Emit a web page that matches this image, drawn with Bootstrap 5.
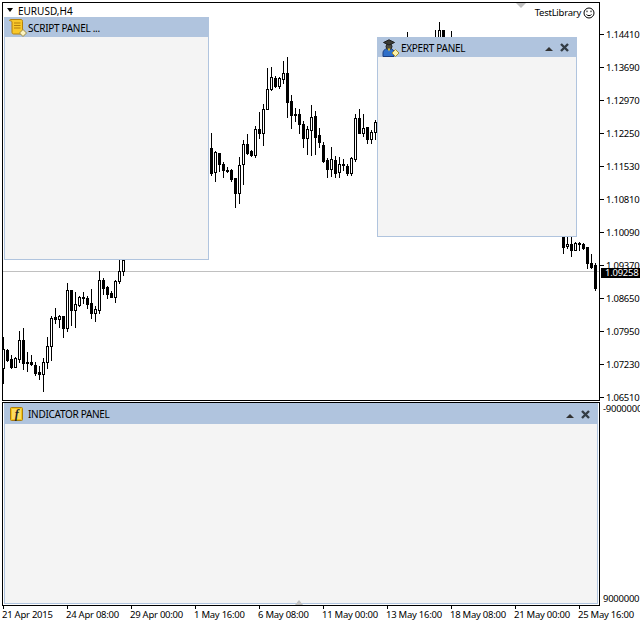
<!DOCTYPE html>
<html lang="en">
<head>
<meta charset="utf-8">
<title>EURUSD,H4</title>
<link href="https://cdn.jsdelivr.net/npm/bootstrap@5.3.0/dist/css/bootstrap.min.css" rel="stylesheet">
<style>
html,body{margin:0;background:#fff}
.mt-root{width:640px;height:620px;overflow:hidden;padding-top:2px;font-family:"Noto Sans","DejaVu Sans",sans-serif;font-size:9.5px;letter-spacing:-.25px;line-height:12px;color:#000}
.mt-main{height:399px}
.mt-pane{width:598px;margin-left:2px;border:1px solid #000;flex:none;position:relative}
.mt-pane svg.mt-chart{display:block}
.mt-axis{flex:1 1 auto;position:relative;min-width:0;white-space:nowrap}
.mt-tick-list{padding-top:16px}
.mt-tick{height:33px;gap:2px}
.mt-tick::before{content:"";display:block;width:4px;height:1px;background:#000;flex:none}
.mt-price{position:absolute;left:1px;top:266px;width:40px;height:10px;line-height:10px;padding-left:4px;background:#000;color:#fff}
.mt-symbol{position:absolute;left:15px;top:2px;color:#000;font-size:10px;letter-spacing:0}
.mt-symbol-arrow{position:absolute;left:4px;top:5px;width:0;height:0;border-left:3.5px solid transparent;border-right:3.5px solid transparent;border-top:4px solid #000}
.mt-lib{position:absolute;right:4px;top:4px;gap:2px}
.mt-shift{position:absolute;left:513px;top:0;width:0;height:0;border-left:5px solid transparent;border-right:5px solid transparent;border-top:5px solid #c0c0c0}
.mt-sub{height:204px;margin-top:1px}
.mt-subpane{padding:0 0 0 1px;background:#fff;position:relative}
.mt-shift-up{position:absolute;left:292px;bottom:0;width:0;height:0;border-left:4px solid transparent;border-right:4px solid transparent;border-bottom:5px solid #c0c0c0}
.mt-window{border:1px solid #b0c4de;border-radius:0;background:#f4f4f4;color:#000;--bs-card-bg:#f4f4f4}
.mt-window-float{position:absolute}
.mt-w-script{left:1px;top:14px;width:205px;height:243px}
.mt-w-expert{left:374px;top:34px;width:200px;height:200px}
.mt-w-ind{width:594px;height:201px;margin-top:0}
.mt-head{height:19px;padding:0 7px 0 4px;background:#b0c4de;border:0;border-radius:0!important;gap:1px;flex:none;color:#000;font-size:10px;letter-spacing:-.3px}
.mt-head span{white-space:nowrap}
.mt-head-ind{height:20px}
.mt-icon-f{margin-left:1px}
.mt-ctl{gap:7px}
.mt-sub-axis{height:204px}
.mt-sub-top{padding-left:3px;height:12px;margin-top:1px}
.mt-sub-bot{padding-left:3px;margin-top:auto;margin-bottom:1px}
.mt-time{height:15px;padding-left:3px;margin-top:0}
.mt-time-cell{width:64px;flex:none;position:relative;white-space:nowrap;padding-top:3px;text-indent:-1px}
.mt-time-cell::before{content:"";position:absolute;left:0;top:0;width:1px;height:3px;background:#000}
.mt-time-cell span{display:block;line-height:12px}
</style>
</head>
<body>
<div class="mt-root d-flex flex-column">
  <div class="mt-main d-flex">
    <div class="mt-pane">
      <svg class="mt-chart" id="chart" width="596" height="397" viewBox="3 3 596 397" shape-rendering="crispEdges"></svg>
      <div class="mt-symbol-arrow"></div>
      <div class="mt-symbol">EURUSD,H4</div>
      <div class="mt-shift"></div>
      <div class="mt-lib d-flex align-items-center">
        <span>TestLibrary</span>
        <svg width="12" height="12" viewBox="0 0 12 12" fill="none" stroke="#000"><circle cx="6" cy="6" r="5"/><path d="M3.5 7.500c1 1.500 4 1.500 5 0"/><path d="M4 3.600v1.600M8 3.600v1.600"/></svg>
      </div>

      <div class="card mt-window mt-window-float mt-w-script">
        <div class="card-header mt-head d-flex align-items-center">
          <svg width="18" height="18" viewBox="0 0 18 18" shape-rendering="geometricPrecision"><path d="M.5 1.500C.5.800 1 .5 2 .5h10c1.200 0 1.500.8 1.500 2v10l1 2.500H4.500c-1.200 0-1.500-1-1.500-2V3c0-.8-.8-1-2.500-1.500z" fill="#f8c82a" stroke="#b27f0c"/><path d="M5 4h6.500M5 6.500h6.500M5 9h6.500" stroke="#b27f0c"/><path d="M14 10.500l3.500 3.500L14 17.500 10.500 14z" fill="#fbf3c0" stroke="#9c8a45"/></svg>
          <span>SCRIPT PANEL ...</span>
        </div>
      </div>

      <div class="card mt-window mt-window-float mt-w-expert">
        <div class="card-header mt-head d-flex align-items-center">
          <svg width="18" height="18" viewBox="0 0 18 18" shape-rendering="geometricPrecision"><path d="M1 14c0-3 2.500-4.500 6-4.500s5 1.500 5 4.500v3.500H1z" fill="#2f6fc9" stroke="#1d3f80"/><circle cx="7" cy="7.500" r="3" fill="#4a4a40" stroke="#222"/><path d="M1.500 3.500L7 .8l5.500 2.700L7 6z" fill="#3c3c36" stroke="#1d1d1d"/><path d="M5.500 9.500l1.500 3 1.500-3z" fill="#e8c531"/><path d="M13.500 10.500l3.500 3.500-3.500 3.500-3.500-3.500z" fill="#fbf0a8" stroke="#a59233"/></svg>
          <span>EXPERT PANEL</span>
          <div class="mt-ctl d-flex align-items-center ms-auto">
            <svg width="8" height="9" viewBox="0 0 8 9"><path d="M0 8l4-4 4 4z" fill="#333"/></svg>
            <svg width="9" height="9" viewBox="0 0 9 9" shape-rendering="geometricPrecision"><path d="M1 1l7 7M8 1L1 8" stroke="#333d46" stroke-width="2.400"/></svg>
          </div>
        </div>
      </div>
    </div>
    <div class="mt-axis">
      <div class="mt-tick-list">
        <div class="mt-tick d-flex align-items-center"><span>1.14410</span></div>
        <div class="mt-tick d-flex align-items-center"><span>1.13690</span></div>
        <div class="mt-tick d-flex align-items-center"><span>1.12970</span></div>
        <div class="mt-tick d-flex align-items-center"><span>1.12250</span></div>
        <div class="mt-tick d-flex align-items-center"><span>1.11530</span></div>
        <div class="mt-tick d-flex align-items-center"><span>1.10810</span></div>
        <div class="mt-tick d-flex align-items-center"><span>1.10090</span></div>
        <div class="mt-tick d-flex align-items-center"><span>1.09370</span></div>
        <div class="mt-tick d-flex align-items-center"><span>1.08650</span></div>
        <div class="mt-tick d-flex align-items-center"><span>1.07950</span></div>
        <div class="mt-tick d-flex align-items-center"><span>1.07230</span></div>
        <div class="mt-tick d-flex align-items-center"><span>1.06510</span></div>
      </div>
      <div class="mt-price">1.09258</div>
    </div>
  </div>
  <div class="mt-sub d-flex">
    <div class="mt-pane mt-subpane">
      <div class="card mt-window mt-w-ind">
        <div class="card-header mt-head mt-head-ind d-flex align-items-center">
          <svg class="mt-icon-f" width="13" height="14" viewBox="0 0 13 14" shape-rendering="geometricPrecision"><rect x=".5" y=".5" width="12" height="13" rx="1" fill="#f5c518" stroke="#a87c10"/><rect x="2" y="2" width="9" height="10" fill="#fbdc62"/><text x="6.500" y="11" text-anchor="middle" font-family="Liberation Serif,serif" font-style="italic" font-weight="700" font-size="12" fill="#222">f</text></svg>
          <span class="ms-1">INDICATOR PANEL</span>
          <div class="mt-ctl d-flex align-items-center ms-auto">
            <svg width="8" height="9" viewBox="0 0 8 9"><path d="M0 8l4-4 4 4z" fill="#333"/></svg>
            <svg width="9" height="9" viewBox="0 0 9 9" shape-rendering="geometricPrecision"><path d="M1 1l7 7M8 1L1 8" stroke="#333d46" stroke-width="2.400"/></svg>
          </div>
        </div>
      </div>
      <div class="mt-shift-up"></div>
    </div>
    <div class="mt-axis mt-sub-axis d-flex flex-column">
      <div class="mt-sub-top">-9000000</div>
      <div class="mt-sub-bot">9000000</div>
    </div>
  </div>
  <div class="mt-time d-flex">
    <div class="mt-time-cell"><span>21 Apr 2015</span></div>
    <div class="mt-time-cell"><span>24 Apr 08:00</span></div>
    <div class="mt-time-cell"><span>29 Apr 00:00</span></div>
    <div class="mt-time-cell"><span>1 May 16:00</span></div>
    <div class="mt-time-cell"><span>6 May 08:00</span></div>
    <div class="mt-time-cell"><span>11 May 00:00</span></div>
    <div class="mt-time-cell"><span>13 May 16:00</span></div>
    <div class="mt-time-cell"><span>18 May 08:00</span></div>
    <div class="mt-time-cell"><span>21 May 00:00</span></div>
    <div class="mt-time-cell"><span>25 May 16:00</span></div>
  </div>
</div>
<script>
// each bar: high, low, body top, body bottom, hollow(1)/black(0), in crop units (3 = 1px)
var setA=[[245,383,283,340,1],[283,318,285,315,0],[300,338,312,336,0],[306,336,310,335,1],[228,322,255,312,1],[218,342,255,323,0],[292,347,321,323,0],[300,330,321,327,0],[322,360,330,354,0],[333,372,351,356,0],[308,407,322,356,1],[246,338,274,322,1],[182,314,190,274,1],[160,205,187,191,0],[180,216,183,191,1],[183,245,183,218,0],[84,227,106,218,1],[104,210,106,164,0],[111,215,148,166,1],[124,152,126,149,1],[111,144,126,130,0],[122,158,128,146,0],[101,188,144,173,0],[153,197,163,173,1],[48,173,76,164,1],[70,118,76,100,0],[93,130,96,116,0],[107,125,114,125,0],[76,140,79,125,1],[15,85,48,79,1],[-30,60,15,47,1]];
var setB=[[250,375,295,368,0],[303,392,307,367,1],[308,362,310,343,0],[337,380,343,360,0],[352,367,360,362,0],[358,392,361,387,0],[385,470,385,428,0],[321,458,344,428,1],[270,402,283,343,1],[252,312,283,308,0],[300,317,303,314,0],[228,322,238,315,1],[186,265,238,248,0],[163,285,176,248,1],[54,178,118,176,1],[52,120,82,118,1],[78,110,85,107,0],[82,113,85,107,1],[33,100,68,86,1],[22,200,70,155,0],[135,234,154,194,0],[173,213,193,195,0],[178,248,192,221,0],[212,290,221,263,0],[228,312,238,263,1],[166,315,202,241,1],[183,312,198,260,0],[235,290,256,275,0],[275,335,286,332,0],[325,380,330,357,0],[291,377,328,356,1],[318,380,331,368,0],[320,380,343,365,1],[328,360,343,346,0],[343,375,348,368,0],[320,375,325,368,1],[192,332,205,326,1],[178,250,205,248,0],[193,257,235,248,1],[232,278,232,268,0],[240,278,247,268,1],[210,268,217,247,1]];
var setC=[[37,85,37,65,0,563],[37,70,57,63,1,567],[37,92,57,74,0,571],[50,76,55,75,1,575],[52,75,55,57,0,579],[55,72,58,70,0,583],[65,130,65,115,0,587],[87,130,115,127,0,591],[115,195,120,188,0,595]];
var s=['<line x1="3" x2="599" y1="271.5" y2="271.5" stroke="#c0c0c0"/>'];
function bar(c,hi,lo,t,b,h){
  var o='<rect x="'+c+'" y="'+hi+'" width="1" height="'+(lo-hi+1)+'" fill="#000"/>';
  o+='<rect x="'+(c-1)+'" y="'+t+'" width="3" height="'+Math.max(b-t+1,1)+'" fill="#000"/>';
  if(h&&b-t>1)o+='<rect x="'+c+'" y="'+(t+1)+'" width="1" height="'+(b-t-1)+'" fill="#fff"/>';
  return o;
}
function put(a,x0,base){a.forEach(function(r,i){var f=function(v){return Math.round(base+v/3)};s.push(bar(r[5]||x0+4*i,f(r[0]),f(r[1]),f(r[2]),f(r[3]),r[4]))})}
put(setA,3,255);put(setB,211,50);put(setC,0,225);
[[407,32,37,0,0],[435,30,37,0,0],[439,22,37,30,1],[443,30,37,30,0],[451,31,37,0,0]].forEach(function(r){s.push(r[2]&&r[3]?bar(r[0],r[1],r[2],r[3],r[2],r[4]):'<rect x="'+r[0]+'" y="'+r[1]+'" width="1" height="'+(r[2]-r[1])+'"/>')});
document.getElementById('chart').innerHTML=s.join('');
</script>
<script src="https://cdn.jsdelivr.net/npm/bootstrap@5.3.0/dist/js/bootstrap.bundle.min.js"></script>
</body>
</html>
